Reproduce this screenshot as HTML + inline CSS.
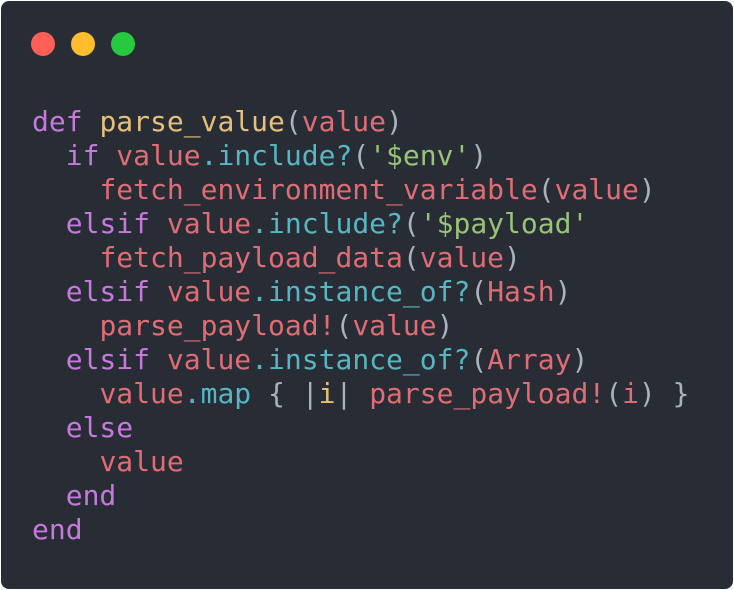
<!DOCTYPE html>
<html><head><style>
html,body{margin:0;padding:0;background:#fff;width:734px;height:590px;overflow:hidden}
.card{position:absolute;left:1px;top:1px;width:732px;height:588px;background:#282c34;border-radius:8px}
.d{position:absolute;top:31px;width:24px;height:24px;border-radius:50%}
pre{position:absolute;left:32px;top:105px;margin:0;font-family:"DejaVu Sans Mono","Liberation Mono",monospace;font-size:28px;line-height:34px;color:#abb2bf}
.k{color:#c678dd}.y{color:#e5c07b}.r{color:#e06c75}.c{color:#56b6c2}.g{color:#98c379}
</style></head><body>
<div class="card">
<div class="d" style="left:30px;background:#ff5f56"></div>
<div class="d" style="left:70px;background:#ffbd2e"></div>
<div class="d" style="left:110px;background:#27c93f"></div>
</div>
<pre><span class="k">def</span> <span class="y">parse_value</span>(<span class="r">value</span>)
  <span class="k">if</span> <span class="r">value</span><span class="c">.include?</span>(<span class="g">'$env'</span>)
    <span class="r">fetch_environment_variable</span>(<span class="r">value</span>)
  <span class="k">elsif</span> <span class="r">value</span><span class="c">.include?</span>(<span class="g">'$payload'</span>
    <span class="r">fetch_payload_data</span>(<span class="r">value</span>)
  <span class="k">elsif</span> <span class="r">value</span><span class="c">.instance_of?</span>(<span class="r">Hash</span>)
    <span class="r">parse_payload!</span>(<span class="r">value</span>)
  <span class="k">elsif</span> <span class="r">value</span><span class="c">.instance_of?</span>(<span class="r">Array</span>)
    <span class="r">value</span><span class="c">.map</span> { |<span class="y">i</span>| <span class="r">parse_payload!</span>(<span class="r">i</span>) }
  <span class="k">else</span>
    <span class="r">value</span>
  <span class="k">end</span>
<span class="k">end</span></pre>
</body></html>
